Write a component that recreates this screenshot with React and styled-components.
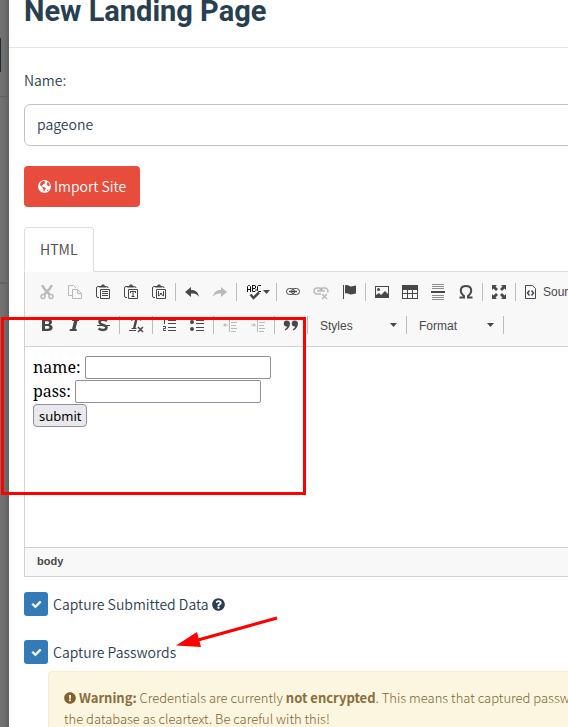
import React from "react";
import styled, { createGlobalStyle } from "styled-components";
import { FaCheck, FaQuestionCircle, FaExclamationCircle } from "react-icons/fa";

const sans = `"Source Sans Pro", "Noto Sans CJK SC", sans-serif`;
const ui = `"Liberation Sans", Arial, sans-serif`;

const GlobalStyle = createGlobalStyle`
  *, *::before, *::after { box-sizing: border-box; }
  html { overflow: hidden; }
  body { margin: 0; background: #fff; color: #2c3e50; font: 350 14px/20px ${sans}; }
  button, input, select { font: inherit; color: inherit; margin: 0; }
`;

const Page = styled.div`
  position: relative;
  display: flex;
  min-height: 100vh;
  overflow: hidden;
`;

const Backdrop = styled.div`
  display: flex;
  flex: none;
  flex-direction: column;
  width: 9px;
  background: linear-gradient(to right, #737373, #6c6c6c 60%, #5e5e5e);
`;

const BackdropBlock = styled.div`
  height: ${(p) => p.$height}px;
  padding-top: 38px;
  border-bottom: ${(p) => p.$line}px solid #616161;
`;

const BackdropButton = styled.div`
  width: 1px;
  height: 34px;
  background: #202b36;
`;

const Modal = styled.main`
  flex: 1 0 auto;
  min-width: 820px;
  background: #fff;
`;

const Header = styled.header`
  padding: 0 15px 25px;
  border-bottom: 1px solid #e5e5e5;
`;

const Title = styled.h2`
  margin: 0;
  color: #283f50;
  font: 700 29px/22px Roboto, sans-serif;
`;

const Body = styled.form`
  display: flex;
  flex-direction: column;
  align-items: stretch;
  padding: 23px 15px 0;
`;

const FieldLabel = styled.label`
  margin-bottom: 15px;
  line-height: 18px;
`;

const TextField = styled.input`
  height: 42px;
  padding: 0 12px 2px;
  border: 1px solid #bdc3c7;
  border-radius: 6px;
  background: #fff;
  outline: none;
`;

const ImportButton = styled.button`
  display: flex;
  align-items: center;
  align-self: flex-start;
  gap: 3px;
  height: 41px;
  margin: 20px 0;
  padding: 0 14px 1px;
  border: 0;
  border-radius: 4px;
  background: #e74c3c;
  color: #fff;
  cursor: pointer;
`;

const Tabs = styled.div`
  display: flex;
`;

const Tab = styled.button`
  height: 45px;
  margin-bottom: -1px;
  padding: 0 15px 2px;
  border: 1px solid #ddd;
  border-bottom-color: #fff;
  border-radius: 4px 4px 0 0;
  background: #fff;
  color: #555;
  font-weight: 400;
  z-index: 1;
`;

const Editor = styled.section`
  display: flex;
  flex-direction: column;
  border: 1px solid #d1d1d1;
  border-top-color: #ddd;
`;

const Toolbar = styled.div`
  display: flex;
  flex-direction: column;
  gap: 5px;
  padding: 6px 8px 7px;
  border-bottom: 1px solid #d1d1d1;
  background: #f8f8f8;
  color: #484848;
  font: 12px/16px ${ui};
`;

const ToolRow = styled.div`
  display: flex;
  align-items: center;
  height: 28px;
`;

const Tool = styled.button`
  display: flex;
  align-items: center;
  justify-content: ${(p) => (p.$wide ? "flex-start" : "center")};
  gap: ${(p) => p.$gap || 6}px;
  flex: none;
  width: ${(p) => p.$wide || 28}px;
  height: 28px;
  padding: 0 0 0 ${(p) => (p.$wide ? 7 : 0)}px;
  border: 0;
  background: none;
  color: ${(p) => (p.disabled ? "#b9b9b9" : "#484848")};
`;

const Separator = styled.span`
  flex: none;
  width: 1px;
  height: 18px;
  margin: 0 2px;
  background: #bcbcbc;
`;

const Combo = styled.label`
  display: flex;
  align-items: center;
  flex: none;
  width: ${(p) => p.$width}px;
`;

const ComboSelect = styled.select`
  flex: 1;
  min-width: 0;
  height: 28px;
  padding: 2px 0 0 10px;
  border: 0;
  background: none;
  appearance: none;
  outline: none;
`;

const CaretBox = styled.span`
  display: flex;
  padding-right: 7px;
`;

const EditArea = styled.div`
  min-height: 200px;
  padding: 9px 8px;
  color: #000;
  font: 16px/22px "Noto Serif", "Droid Serif", "Liberation Serif", serif;
`;

const FormLine = styled.div`
  display: flex;
  align-items: flex-start;
  gap: 4px;
  height: 24px;
`;

const FormInput = styled.input`
  width: 186px;
  height: 23px;
  border: 1px solid #8f8f9d;
  border-radius: 2px;
  background: #fff;
`;

const FormSubmit = styled.button`
  height: 23px;
  padding: 0 5px;
  border: 1px solid #8f8f9d;
  border-radius: 4px;
  background: #e9e9ed;
  font: 13px/20px "Noto Sans", sans-serif;
`;

const PathBar = styled.footer`
  padding: 5px 12px 7px;
  border-top: 1px solid #d1d1d1;
  background: #f8f8f8;
  color: #484848;
  font: 700 11px/16px ${ui};
`;

const Option = styled.label`
  display: flex;
  align-items: center;
  gap: 5px;
  height: 24px;
  margin-top: ${(p) => p.$gap}px;
`;

const TickWrap = styled.span`
  display: grid;
  place-items: center;
  width: 24px;
  height: 24px;
  color: #fff;

  & > * { grid-area: 1 / 1; }
  & > svg { pointer-events: none; z-index: 1; stroke: #fff; stroke-width: 40px; overflow: visible; }
`;

const Tick = styled.input`
  width: 24px;
  height: 24px;
  border-radius: 3px;
  background: #337ab7;
  appearance: none;
`;

const OptionText = styled.span`
  display: flex;
  align-items: center;
  gap: 3px;
`;

const Warning = styled.div`
  margin: 7px 0 0 24px;
  padding: 15px;
  border: 1px solid #faebcc;
  border-radius: 4px;
  background: #fcf6e1;
  color: #80622f;
  font-size: 13px;
  font-weight: 300;
  line-height: 21px;
  white-space: nowrap;

  b { font-weight: 700; color: #8a6d3b; }
  svg { vertical-align: -1px; margin-right: 3px; }
`;

const HighlightBox = styled.div`
  position: absolute;
  top: 317px;
  left: 1px;
  width: 305px;
  height: 178px;
  border: 3px solid #f00;
  z-index: 3;
  pointer-events: none;
`;

const Arrow = styled.svg`
  position: absolute;
  top: 610px;
  left: 170px;
  z-index: 3;
  pointer-events: none;
`;

const Icon = ({ children, w = 16, h = 16, line = false }) => (
  <svg
    width={w}
    height={h}
    viewBox={`0 0 ${w} ${h}`}
    fill={line ? "none" : "currentColor"}
    stroke={line ? "currentColor" : "none"}
    aria-hidden="true"
  >
    {children}
  </svg>
);

const Caret = () => (
  <Icon w={7} h={4}><path d="M0 0h7L3.5 4z" /></Icon>
);

const Globe = () => (
  <svg width="13" height="13" viewBox="0 0 13 13" aria-hidden="true">
    <circle cx="6.5" cy="6.5" r="6.5" fill="#fff" />
    <path d="M3.400 1.800L5.800.9l1.700.5-1 .9.900.5-.8 1-1.300.3-.6 1.200-1.200.3.500.9 1.700.4 1.300.8 1.300.5-1.300 1.400-.7 1.800-.6-.2-.3-2-.9-1.300-.1-1-1.600-1-.9-1.700zM9.300 2.600l1-.3 1.200 1.800.3 1.500-1.200.6-1.300-.9-.6-1.200zM9.200 10l1.400-.8-.5 1.400-1.200.8z" fill="#e74c3c" />
  </svg>
);

const clipboard = (
  <>
    <path d="M4 2.500H3Q1.500 2.500 1.500 4v8q0 1.500 1.500 1.500h1M11.500 2.500q1.500 0 1.500 1.500" fill="none" stroke="currentColor" />
    <path d="M4 3.500V2h2L7 .5h2L10 2h1.500v1.500z" />
    <path d="M5.500 5.500h9v9h-9z" fill="none" stroke="currentColor" />
  </>
);

const indentLines = (
  <path d="M7.500 1v14M9 2.500h5M9 5.500h6M9 8.500h5M9 11.500h6M9 14.500h5" fill="none" stroke="currentColor" />
);

const icons = {
  cut: (
    <Icon line>
      <path d="M3.500 1c0 3 4.500 6 7 9.500M12.500 1c0 3-4.500 6-7 9.500" strokeWidth="2.500" />
      <circle cx="4" cy="12.500" r="2" strokeWidth="1.500" /><circle cx="12" cy="12.500" r="2" strokeWidth="1.500" />
    </Icon>
  ),
  copy: (
    <Icon line>
      <path d="M5 11.500H1.500V1.500h5L9 4" />
      <path d="M5.500 5.500h5L14.500 9.500v5h-9zM10.500 5.500V9.500h4" />
    </Icon>
  ),
  paste: <Icon>{clipboard}<path d="M7 7h6v1H7zM7 9h6v1H7zM7 11h6v1H7z" /></Icon>,
  pasteText: <Icon>{clipboard}<path d="M7 7h6v2h-1V8h-1.500v4h1v1h-3v-1h1V8H8v1H7z" /></Icon>,
  pasteWord: <Icon>{clipboard}<path d="M7.500 7v5l2-1.500V9M12.500 7v5l-2-1.500V9" fill="none" stroke="currentColor" /></Icon>,
  undo: <Icon><path d="M1 8l6-5v3c4 0 7 1.500 8 7-2-3-4-3.500-8-3.500V13z" /></Icon>,
  redo: <Icon><path d="M15 8L9 3v3c-4 0-7 1.500-8 7 2-3 4-3.500 8-3.500V13z" /></Icon>,
  spell: (
    <Icon line>
      <path d="M1.500 8V2.500L2.500 1.500h1l1 1V8M1.500 5.500h3M6.500 1v6.500H9l1-1v-1l-1-1H6.500M6.500 1.500H9l.5.5v2M15 1.500h-2.500l-1 1v4l1 1H15" stroke="#111" />
      <path d="M4.500 10.500l3 3.500L13 8.500" strokeWidth="2.500" />
    </Icon>
  ),
  link: (
    <Icon line>
      <rect x="1.500" y="4.500" width="8" height="6" rx="3" />
      <rect x="6.500" y="4.500" width="8" height="6" rx="3" />
      <path d="M4 7.500h8" strokeWidth="1.500" />
    </Icon>
  ),
  unlink: (
    <Icon line>
      <path d="M8 10H4a3 3 0 010-6h2a3 3 0 013 3M7 7a3 3 0 013-3h2a3 3 0 012.500 4.500M4 7h8" strokeWidth="1.500" />
      <path d="M9 10l5 5M14 10l-5 5" strokeWidth="1.500" />
    </Icon>
  ),
  flag: <Icon><path d="M2 1h1v14H2zM4 1.500c3-1.500 4 1 6 1s3-1 5-1v8c-2 0-3 1-5 1s-3-2-6-1z" /></Icon>,
  image: (
    <Icon>
      <path d="M1 2h14v12H1zM2 3v10h12V3z" fillRule="evenodd" />
      <circle cx="4.500" cy="5.500" r="1.500" />
      <path d="M2 13v-2l3-2 2 2 4-4 3 3v3z" />
    </Icon>
  ),
  table: <Icon><path d="M0 1h16v14H0zM1 6v3h4V6zM6 6v3h4V6zM11 6v3h4V6zM1 10v4h4v-4zM6 10v4h4v-4zM11 10v4h4v-4z" fillRule="evenodd" /></Icon>,
  rule: (
    <Icon>
      <path d="M2 0h12v1H2zM2 2h12v1H2zM2 4h12v1H2zM2 11h12v1H2zM2 13h12v1H2zM2 15h12v1H2z" opacity=".6" />
      <path d="M1 7h14v2H1z" />
    </Icon>
  ),
  omega: (
    <Icon line>
      <path d="M1.500 13.500h4.500V12C1 8 2 2 8 2s7 6 2 10v1.500h4.500" strokeWidth="2" />
    </Icon>
  ),
  maximize: (
    <Icon>
      <path d="M1 1h5L4.500 2.500 7 5 5 7 2.500 4.500 1 6zM15 1v5l-1.500-1.500L11 7 9 5l2.500-2.500L10 1zM1 15v-5l1.500 1.500L5 9l2 2-2.500 2.500L6 15zM15 15h-5l1.500-1.500L9 11l2-2 2.500 2.500L15 10z" />
    </Icon>
  ),
  source: (
    <Icon w={12} line>
      <path d="M.5 1.500h7l3 3v10H.5z" />
      <path d="M4.500 6.500L2.500 9l2 2.500M6.500 6.500l2 2.500-2 2.500" strokeWidth="1.500" />
    </Icon>
  ),
  bold: <Icon><path d="M3 2h6c5 0 5 5 2 5.700 4 .8 3.500 6.300-2 6.300H3zM6 4.200V7h2.500c2 0 2-2.800 0-2.800zM6 9v2.800h2.500c2.500 0 2.500-2.800 0-2.800z" fillRule="evenodd" /></Icon>,
  italic: <Icon><path d="M5.500 2h7l-.5 2h-1.500l-2 8H10l-.5 2h-7l.5-2h2l2-8H5z" /></Icon>,
  strike: (
    <Icon line>
      <path d="M12 4C9 2 4.500 2.500 4.500 5c0 3.500 7 2.500 7 5.500 0 3-5 3-8 1" strokeWidth="2.500" />
      <path d="M2 8.500h13" />
    </Icon>
  ),
  clear: (
    <Icon>
      <path d="M3 1h10l-.5 3H12l-.5-1.500H9.500L7.500 11h1v1h-5v-1H5l2-8.500H5L4 4h-.7zM1 13h7v1H1z" />
      <path d="M10 10l5 5M15 10l-5 5" fill="none" stroke="currentColor" strokeWidth="1.500" />
    </Icon>
  ),
  numbered: (
    <Icon line>
      <path d="M2 2.500h1.500V7M2 9.500h2.500v2h-2v2H5M7 3.500h8M7 6.500h8M7 10.500h8M7 13.500h8" />
    </Icon>
  ),
  bulleted: (
    <Icon>
      <circle cx="3" cy="5" r="2" /><circle cx="3" cy="12" r="2" />
      <path d="M7 3h8v1H7zM7 6h8v1H7zM7 10h8v1H7zM7 13h8v1H7z" />
    </Icon>
  ),
  outdent: <Icon>{indentLines}<path d="M1 8l2.500-2v1.500H6v1H3.500V10z" /></Icon>,
  indent: <Icon>{indentLines}<path d="M6 8L3.500 6v1.500H1v1h2.500V10z" /></Icon>,
  quote: (
    <Icon>
      <path d="M3.500 3.500a3 3 0 013.500 3c0 3-2 6-5 7v-1.500c1.500-.7 2-1.500 2-2.500a3 3 0 01-.5-6zM11.500 3.500a3 3 0 013.500 3c0 3-2 6-5 7v-1.500c1.500-.7 2-1.500 2-2.500a3 3 0 01-.5-6z" />
    </Icon>
  ),
};

const topTools = [
  ["cut", "Cut", true], ["copy", "Copy", true], ["paste", "Paste"],
  ["pasteText", "Paste as plain text"], ["pasteWord", "Paste from Word"], null,
  ["undo", "Undo"], ["redo", "Redo", true], null,
  ["spell", "Spell Check", false, 35], null,
  ["link", "Link"], ["unlink", "Unlink", true], ["flag", "Anchor"], null,
  ["image", "Image"], ["table", "Table"], ["rule", "Horizontal Line"], ["omega", "Special Character"], null,
  ["maximize", "Maximize"], null,
];

const bottomTools = [
  ["bold", "Bold"], ["italic", "Italic"], ["strike", "Strikethrough"], null,
  ["clear", "Remove Format"], null,
  ["numbered", "Numbered List"], ["bulleted", "Bulleted List"], null,
  ["outdent", "Decrease Indent", true], ["indent", "Increase Indent", true], null,
  ["quote", "Block Quote"], null,
];

const Tools = ({ items }) =>
  items.map((item, i) => {
    if (!item) return <Separator key={i} />;
    const [name, label, disabled, wide] = item;
    return (
      <Tool key={i} type="button" aria-label={label} disabled={Boolean(disabled)} $wide={wide} $gap={1}>
        {icons[name]}
        {name === "spell" && <Caret />}
      </Tool>
    );
  });

const ToolCombo = ({ label, width }) => (
  <Combo $width={width}>
    <ComboSelect aria-label={label} defaultValue={label}>
      <option>{label}</option>
    </ComboSelect>
    <CaretBox><Caret /></CaretBox>
  </Combo>
);

const TickOption = ({ id, gap, children }) => (
  <Option htmlFor={id} $gap={gap}>
    <TickWrap>
      <Tick id={id} type="checkbox" defaultChecked />
      <FaCheck size={9} />
    </TickWrap>
    <OptionText>{children}</OptionText>
  </Option>
);

export default function App() {
  return (
    <>
      <GlobalStyle />
      <Page>
        <Backdrop>
          <BackdropBlock $height={97} $line={1}><BackdropButton /></BackdropBlock>
          <BackdropBlock $height={187} $line={2} />
        </Backdrop>
        <Modal>
          <Header><Title>New Landing Page</Title></Header>
          <Body onSubmit={(e) => e.preventDefault()}>
            <FieldLabel htmlFor="page-name">Name:</FieldLabel>
            <TextField id="page-name" type="text" defaultValue="pageone" />
            <ImportButton type="button"><Globe />Import Site</ImportButton>
            <Tabs><Tab type="button">HTML</Tab></Tabs>
            <Editor>
              <Toolbar>
                <ToolRow>
                  <Tools items={topTools} />
                  <Tool type="button" $wide={76}>{icons.source}Source</Tool>
                </ToolRow>
                <ToolRow>
                  <Tools items={bottomTools} />
                  <ToolCombo label="Styles" width={94} />
                  <Separator />
                  <ToolCombo label="Format" width={92} />
                  <Separator />
                </ToolRow>
              </Toolbar>
              <EditArea>
                <FormLine><label htmlFor="f-name">name:</label><FormInput id="f-name" type="text" /></FormLine>
                <FormLine><label htmlFor="f-pass">pass:</label><FormInput id="f-pass" type="password" /></FormLine>
                <FormLine><FormSubmit type="button">submit</FormSubmit></FormLine>
              </EditArea>
              <PathBar>body</PathBar>
            </Editor>
            <TickOption id="capture-data" gap={15}>Capture Submitted Data <FaQuestionCircle size={13} /></TickOption>
            <TickOption id="capture-passwords" gap={24}>Capture Passwords</TickOption>
            <Warning>
              <FaExclamationCircle size={12} />
              <b>Warning:</b> Credentials are currently <b>not encrypted</b>. This means that captured passwords are stored in
              <br />
              the database as cleartext. Be careful with this!
            </Warning>
          </Body>
        </Modal>
        <HighlightBox />
        <Arrow width="112" height="44" viewBox="0 0 112 44" aria-hidden="true">
          <path d="M107 8L28 30" stroke="#f00" strokeWidth="3" />
          <path d="M6 35.500L27 22l4 15z" fill="#f00" />
        </Arrow>
      </Page>
    </>
  );
}
